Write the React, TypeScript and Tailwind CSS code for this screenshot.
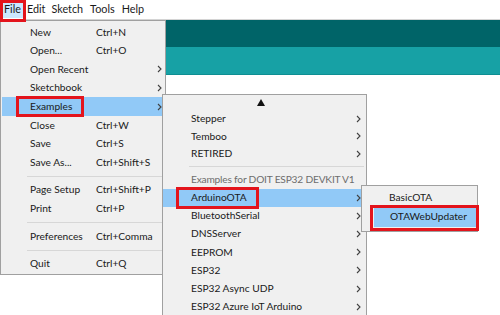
import React from "react";

const font = { fontFamily: 'Lato, "Noto Sans", sans-serif' };

function Chevron() {
  return (
    <svg width="5" height="8" viewBox="0 0 5 8" className="shrink-0">
      <path d="M1 1 L4 4 L1 7" fill="none" stroke="#404040" strokeWidth="1.1" />
    </svg>
  );
}

type FileItem = { label?: string; shortcut?: string; sub?: boolean; sep?: boolean; active?: boolean };

const fileItems: FileItem[] = [
  { label: "New", shortcut: "Ctrl+N" },
  { label: "Open...", shortcut: "Ctrl+O" },
  { label: "Open Recent", sub: true },
  { label: "Sketchbook", sub: true },
  { label: "Examples", sub: true, active: true },
  { label: "Close", shortcut: "Ctrl+W" },
  { label: "Save", shortcut: "Ctrl+S" },
  { label: "Save As...", shortcut: "Ctrl+Shift+S" },
  { sep: true },
  { label: "Page Setup", shortcut: "Ctrl+Shift+P" },
  { label: "Print", shortcut: "Ctrl+P" },
  { sep: true },
  { label: "Preferences", shortcut: "Ctrl+Comma" },
  { sep: true },
  { label: "Quit", shortcut: "Ctrl+Q" },
];

const exampleItems = [
  "ArduinoOTA",
  "BluetoothSerial",
  "DNSServer",
  "EEPROM",
  "ESP32",
  "ESP32 Async UDP",
  "ESP32 Azure IoT Arduino",
];

export default function App() {
  return (
    <div className="relative w-[500px] h-[315px] overflow-hidden bg-white text-[10.2px] text-[#1a1a1a] whitespace-nowrap" style={font}>
      {/* menu bar */}
      <div className="flex items-center h-[19px] bg-white text-[10.8px]">
        <span className="pl-[4px] pr-[4px] bg-[#cce8ff]">File</span>
        <span className="ml-[2px]">Edit</span>
        <span className="ml-[6px]">Sketch</span>
        <span className="ml-[7px]">Tools</span>
        <span className="ml-[7px]">Help</span>
      </div>
      <div className="h-[1px] bg-[#d4d4d4]" />
      <div className="h-[27px] bg-[#006468]" />
      <div className="h-[28px] bg-[#17a1a5] border-b border-[#0e8e92]" />

      {/* File menu */}
      <div className="absolute left-0 top-[20px] w-[166px] bg-[#f0f0f0] border border-[#a0a0a0] pt-[2px] pb-[1px]">
        {fileItems.map((it, i) =>
          it.sep ? (
            <div key={i} className="h-[9px] flex items-center pl-[26px] pr-[2px]">
              <div className="h-[1px] w-full bg-[#d7d7d7]" />
            </div>
          ) : (
            <div
              key={i}
              className={`h-[18.6px] flex items-center mx-[1px] ${it.active ? "bg-[#91c9f7]" : ""}`}
            >
              <span className="pl-[28px] w-[94px]">{it.label}</span>
              <span className="flex-1">{it.shortcut}</span>
              {it.sub && (
                <span className="pr-[2px]">
                  <Chevron />
                </span>
              )}
            </div>
          )
        )}
      </div>

      {/* Examples submenu */}
      <div className="absolute left-[162px] top-[94px] w-[205px] h-[240px] bg-[#f0f0f0] border border-[#a0a0a0]">
        <div className="h-[15px] flex items-center justify-center pr-[8px]">
          <svg width="8" height="7" viewBox="0 0 8 7">
            <path d="M4 0 L8 7 L0 7 Z" fill="#111" />
          </svg>
        </div>
        {["Stepper", "Temboo", "RETIRED"].map((t) => (
          <div key={t} className="h-[17.5px] flex items-center pl-[28px] pr-[5px]">
            <span className="flex-1">{t}</span>
            <Chevron />
          </div>
        ))}
        <div className="h-[8px] flex items-center pl-[26px] pr-[2px]">
          <div className="h-[1px] w-full bg-[#d7d7d7]" />
        </div>
        <div className="h-[18px] flex items-center pl-[28px] text-[#6d6d6d] tracking-[-0.2px]">Examples for DOIT ESP32 DEVKIT V1</div>
        {exampleItems.map((t, i) => (
          <div
            key={t}
            className={`h-[18.2px] flex items-center pl-[28px] pr-[5px] ${i === 0 ? "bg-[#91c9f7]" : ""}`}
          >
            <span className="flex-1">{t}</span>
            <Chevron />
          </div>
        ))}
      </div>

      {/* ArduinoOTA submenu */}
      <div className="absolute left-[361px] top-[185px] w-[117px] h-[47px] bg-[#f0f0f0] border border-[#a0a0a0] pt-[2px]">
        <div className="h-[19px] flex items-center pl-[27px]">BasicOTA</div>
        <div className="h-[20px] flex items-center pl-[16px] ml-[12px] mr-[1px] bg-[#91c9f7]">
          OTAWebUpdater
        </div>
      </div>

      {/* red highlight boxes */}
      <div className="absolute left-0 top-0 w-[26px] h-[22px] border-[3px] border-[#e3141c]" />
      <div className="absolute left-[16px] top-[96px] w-[68px] h-[21px] border-[3px] border-[#e3141c]" />
      <div className="absolute left-[176px] top-[187px] w-[83px] h-[22px] border-[3px] border-[#e3141c]" />
      <div className="absolute left-[370px] top-[205px] w-[109px] h-[26px] border-[3px] border-[#e3141c]" />
    </div>
  );
}
